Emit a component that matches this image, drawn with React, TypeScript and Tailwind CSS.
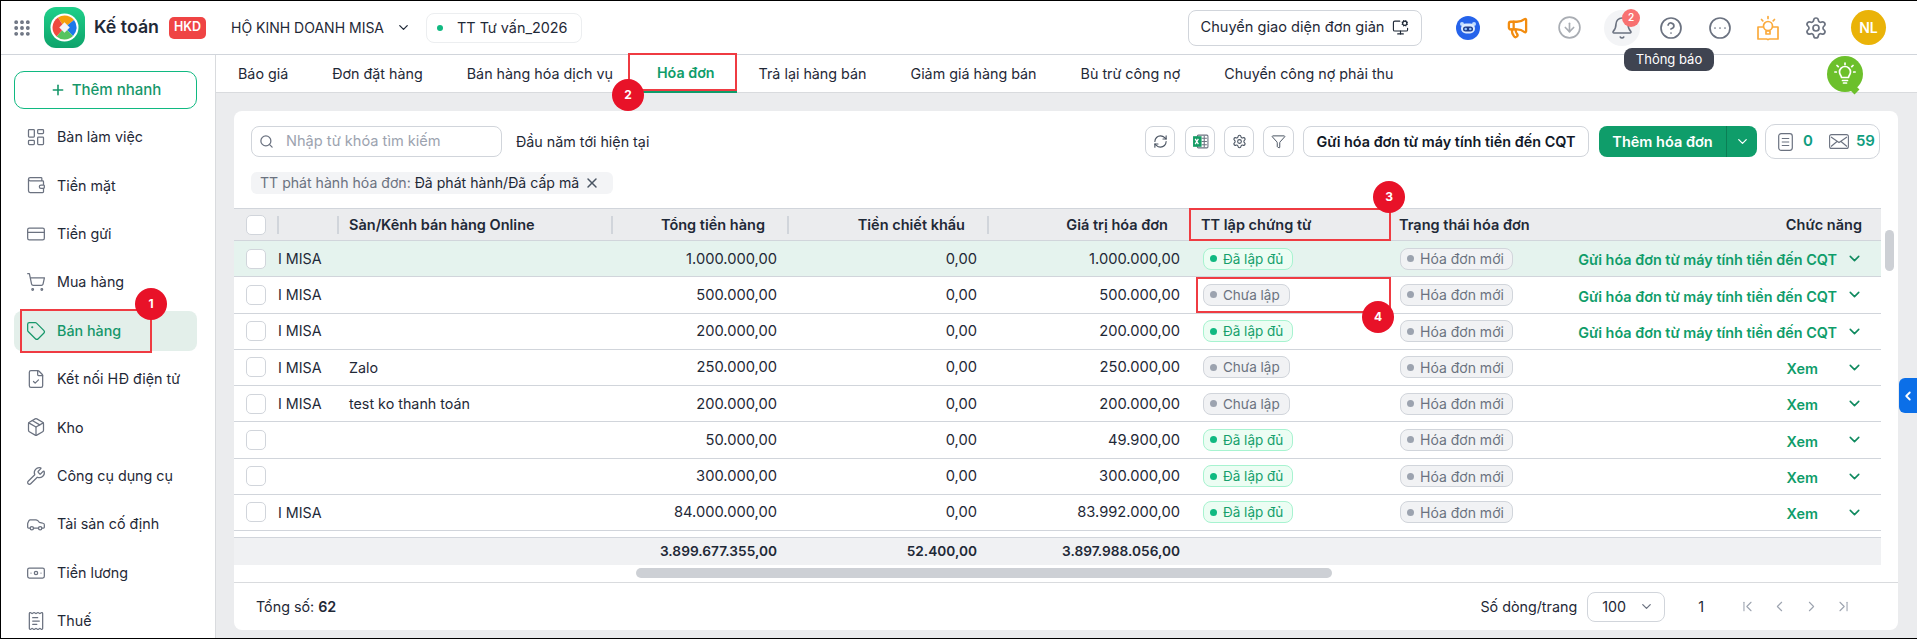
import React from 'react';
import { Grip, ChevronDown, MonitorCog, Megaphone, CircleArrowDown, Bell, CircleHelp, CircleEllipsis, Settings, Plus, LayoutDashboard, Wallet, CreditCard, ShoppingCart, Tag, FileCheck, Package, Wrench, Car, Banknote, ReceiptText, Search, X, RefreshCw, Funnel, ChevronFirst, ChevronLast, ChevronLeft, ChevronRight } from 'lucide-react';

const gridCols = 'grid grid-cols-[43px_60px_274px_176px_200px_203px_198px_493px]';

const navItems = [
  { label: 'Bàn làm việc', Icon: LayoutDashboard },
  { label: 'Tiền mặt', Icon: Wallet },
  { label: 'Tiền gửi', Icon: CreditCard },
  { label: 'Mua hàng', Icon: ShoppingCart },
  { label: 'Bán hàng', Icon: Tag, active: true },
  { label: 'Kết nối HĐ điện tử', Icon: FileCheck },
  { label: 'Kho', Icon: Package },
  { label: 'Công cụ dụng cụ', Icon: Wrench },
  { label: 'Tài sản cố định', Icon: Car },
  { label: 'Tiền lương', Icon: Banknote },
  { label: 'Thuế', Icon: ReceiptText },
];

const tabs = ['Báo giá', 'Đơn đặt hàng', 'Bán hàng hóa dịch vụ', 'Hóa đơn', 'Trả lại hàng bán', 'Giảm giá hàng bán', 'Bù trừ công nợ', 'Chuyển công nợ phải thu'];

const SEND = 'Gửi hóa đơn từ máy tính tiền đến CQT';
const rows = [
  { org: 'I MISA', ch: '', a: '1.000.000,00', b: '0,00', c: '1.000.000,00', ok: true, act: SEND, sel: true },
  { org: 'I MISA', ch: '', a: '500.000,00', b: '0,00', c: '500.000,00', ok: false, act: SEND },
  { org: 'I MISA', ch: '', a: '200.000,00', b: '0,00', c: '200.000,00', ok: true, act: SEND },
  { org: 'I MISA', ch: 'Zalo', a: '250.000,00', b: '0,00', c: '250.000,00', ok: false, act: 'Xem' },
  { org: 'I MISA', ch: 'test ko thanh toán', a: '200.000,00', b: '0,00', c: '200.000,00', ok: false, act: 'Xem' },
  { org: '', ch: '', a: '50.000,00', b: '0,00', c: '49.900,00', ok: true, act: 'Xem' },
  { org: '', ch: '', a: '300.000,00', b: '0,00', c: '300.000,00', ok: true, act: 'Xem' },
  { org: 'I MISA', ch: '', a: '84.000.000,00', b: '0,00', c: '83.992.000,00', ok: true, act: 'Xem' },
];

function Logo() {
  return (
    <div className="w-[41px] h-[41px] rounded-[12px] bg-gradient-to-b from-[#1fd08a] to-[#0ea36b] flex items-center justify-center">
      <svg width="29" height="29" viewBox="0 0 29 29">
        <circle cx="14.5" cy="14.5" r="14" fill="#fff" />
        <path d="M14.5 2.500A12 12 0 0 1 24 7L14.500 14.500L8 4.500A12 12 0 0 1 14.500 2.500Z" fill="#f59e0b" />
        <path d="M24 7A12 12 0 0 1 23 23L14.500 14.500Z" fill="#1d78e8" />
        <path d="M23 23A12 12 0 0 1 6.500 23.500L14.500 14.500Z" fill="#55c45f" />
        <path d="M6.500 23.500A12 12 0 0 1 8 4.500L14.500 14.500Z" fill="#ee4a3e" />
        <rect x="10.800" y="10.800" width="7.400" height="7.400" transform="rotate(45 14.500 14.500)" fill="#f3f4f6" />
      </svg>
    </div>
  );
}

function BotIcon() {
  return (
    <svg width="24" height="24" viewBox="0 0 24 24">
      <circle cx="12" cy="12" r="12" fill="#2563eb" />
      <circle cx="6" cy="8" r="2" fill="#bfdbfe" />
      <circle cx="18" cy="8" r="2" fill="#bfdbfe" />
      <rect x="5" y="7.500" width="14" height="10" rx="5" fill="#dbeafe" />
      <rect x="7" y="10.500" width="10" height="5" rx="2.500" fill="#1e3a8a" />
      <circle cx="9.700" cy="13" r="1.300" fill="#93c5fd" />
      <circle cx="14.300" cy="13" r="1.300" fill="#93c5fd" />
    </svg>
  );
}

function BookBulb() {
  return (
    <svg width="24" height="26" viewBox="0 0 24 26" fill="none" stroke="#fbab3d" strokeWidth="1.700" strokeLinecap="round" strokeLinejoin="round">
      <path d="M7 12H2v12h8.500c.6 0 1 .6 1.500.6s.9-.6 1.500-.6H22V12h-5" />
      <circle cx="12" cy="11" r="4.500" />
      <path d="M10 16h4v3h-4z" />
      <path d="M12 1.500v2M5.500 4.500l1.300 1.300M18.500 4.500l-1.300 1.300" />
    </svg>
  );
}

function ExcelIcon() {
  return (
    <svg width="17" height="17" viewBox="0 0 16 16">
      <rect x="5" y="2" width="10" height="12" rx="1" fill="#fff" stroke="#6b7280" />
      <path d="M9 5h5M9 8h5M9 11h5M11.500 2.500v11" stroke="#6b7280" />
      <rect x="1" y="3" width="8" height="10" fill="#149c64" />
      <path d="M3 5.500l3 5M6 5.500l-3 5" stroke="#fff" strokeWidth="1.200" />
    </svg>
  );
}

function DocIcon() {
  return (
    <svg width="15" height="18" viewBox="0 0 15 18" fill="none" stroke="#6b7280" strokeWidth="1.200">
      <rect x="0.700" y="0.700" width="13.600" height="16.600" rx="2.500" />
      <path d="M3.800 5.500h7.400M3.800 9h7.400M3.800 12.500h7.400" />
    </svg>
  );
}

function EnvIcon() {
  return (
    <svg width="20" height="15" viewBox="0 0 20 15" fill="none" stroke="#6b7280" strokeWidth="1.100">
      <rect x="0.600" y="0.600" width="18.800" height="13.800" rx="2" />
      <path d="M2 3l8 5.500L18 3M2 12.500l6-5M18 12.500l-6-5" />
    </svg>
  );
}

function BulbBadge() {
  return (
    <svg width="22" height="24" viewBox="0 0 22 24" fill="none" stroke="#fff" strokeWidth="1.700" strokeLinecap="round" strokeLinejoin="round">
      <path d="M7.500 15.500c0-2-2-2.800-2-5.500a5.500 5.500 0 0 1 11 0c0 2.700-2 3.500-2 5.500z" />
      <path d="M8.500 18.500h5M9.500 21h3" />
      <path d="M11 1v1.500M3 3.500l1.200 1.200M19 3.500l-1.200 1.200M.800 10h1.500M19.700 10h1.500" />
    </svg>
  );
}

function Badge({ n, className }: { n: number; className: string }) {
  return (
    <div className={`absolute w-8 h-8 rounded-full bg-[#e81228] text-white text-[12px] font-bold flex items-center justify-center ${className}`}>{n}</div>
  );
}

function Status({ ok }: { ok: boolean }) {
  return ok ? (
    <span className="inline-flex items-center h-[22px] w-[90px] pl-[6px] gap-[6px] rounded-lg border border-[#a7f3d0] bg-[#ecfdf3] text-[13.5px] text-[#16a06c] whitespace-nowrap">
      <span className="w-[7px] h-[7px] rounded-full bg-[#10b981]" />Đã lập đủ
    </span>
  ) : (
    <span className="inline-flex items-center h-[22px] w-[87px] pl-[6px] gap-[6px] rounded-lg border border-[#d1d5db] bg-[#f1f2f4] text-[13.5px] text-[#6b7280] whitespace-nowrap">
      <span className="w-[7px] h-[7px] rounded-full bg-[#9ca3af]" />Chưa lập
    </span>
  );
}

function IconBtn({ children, w = 'w-[30px]' }: { children: React.ReactNode; w?: string }) {
  return <button className={`${w} h-[31px] rounded-lg border border-[#d1d5db] bg-white flex items-center justify-center text-[#4b5563]`}>{children}</button>;
}

export default function App() {
  return (
    <div className="relative w-[1917px] h-[639px] overflow-hidden border-y border-l border-black bg-white flex flex-col text-[14.3px] text-[#1f2937] font-['Inter','Noto_Sans',sans-serif]">
      {/* Header */}
      <header className="h-[53px] shrink-0 flex items-center pl-[11px] bg-white">
        <Grip size={20} className="text-[#6b7280]" strokeWidth={2.6} />
        <div className="ml-[12px]"><Logo /></div>
        <span className="ml-[9px] text-[17.8px] font-semibold text-[#1f2937] w-[66px] whitespace-nowrap">Kế toán</span>
        <span className="ml-[9px] w-[37px] h-[22px] rounded-[5px] bg-[#ef4444] text-white text-[12.5px] font-semibold flex items-center justify-center">HKD</span>
        <span className="ml-[25px] whitespace-nowrap w-[156px] text-[14px]">HỘ KINH DOANH MISA</span>
        <ChevronDown size={15} className="ml-[9px]" />
        <div className="ml-[15px] w-[156px] h-[30px] rounded-lg border border-[#eceef0] flex items-center pl-[10px] gap-[14px]">
          <span className="w-[6px] h-[6px] rounded-full bg-[#10b981]" />
          <span className="text-[14.4px] whitespace-nowrap">TT Tư vấn_2026</span>
        </div>
        <button className="ml-[606px] w-[234px] h-[36px] rounded-lg border border-[#d1d5db] flex items-center justify-center gap-[8px] text-[14.6px] whitespace-nowrap">
          Chuyển giao diện đơn giản
          <MonitorCog size={17} strokeWidth={1.6} />
        </button>
        <div className="ml-[28px] flex items-center">
          <div className="w-[36px] flex justify-center"><BotIcon /></div>
          <div className="ml-[13px] w-[36px] flex justify-center"><Megaphone size={23} className="text-[#f28c0f]" strokeWidth={2.4} /></div>
          <div className="ml-[16px] w-[36px] flex justify-center"><CircleArrowDown size={25} className="text-[#a9adb3]" strokeWidth={1.6} /></div>
          <div className="relative ml-[17px] w-[36px] h-[36px] rounded-full bg-[#f3f4f6] flex items-center justify-center">
            <Bell size={24} className="text-[#6b7280]" strokeWidth={1.6} />
            <span className="absolute -top-[1px] right-0 w-[18px] h-[18px] rounded-full bg-[#f87171] text-white text-[10px] font-semibold flex items-center justify-center">2</span>
          </div>
          <div className="ml-[13px] w-[36px] flex justify-center"><CircleHelp size={24} className="text-[#6b7280]" strokeWidth={1.7} /></div>
          <div className="ml-[13px] w-[36px] flex justify-center"><CircleEllipsis size={24} className="text-[#6b7280]" strokeWidth={1.7} /></div>
          <div className="ml-[12px] w-[36px] flex justify-center"><BookBulb /></div>
          <div className="ml-[12px] w-[36px] flex justify-center"><Settings size={24} className="text-[#6b7280]" strokeWidth={1.7} /></div>
          <div className="ml-[17px] w-[35px] h-[35px] rounded-full bg-[#eab308] text-white text-[14px] font-semibold flex items-center justify-center">NL</div>
        </div>
      </header>

      <div className="flex flex-1 min-h-0 border-t border-[#d1d5db]">
        {/* Sidebar */}
        <aside className="w-[215px] shrink-0 border-r border-[#d9dbde] bg-white pt-[16px] px-[13px] overflow-hidden">
          <button className="w-[183px] h-[38px] rounded-[10px] border border-[#10b981] text-[#16976a] font-medium text-[15px] flex items-center justify-center gap-[6px]">
            <Plus size={16} strokeWidth={2.4} />Thêm nhanh
          </button>
          <nav className="mt-[8px] flex flex-col gap-[8.4px]">
            {navItems.map(({ label, Icon, active }) => (
              <div key={label} className={`h-[40px] shrink-0 w-[183px] rounded-lg flex items-center pl-[12px] gap-[11px] ${active ? 'bg-[#e3efea] text-[#16976a] font-medium' : ''}`}>
                <Icon size={20} strokeWidth={1.5} className={active ? 'text-[#16976a]' : 'text-[#6b7280]'} />
                <span className="whitespace-nowrap">{label}</span>
              </div>
            ))}
          </nav>
        </aside>

        {/* Main */}
        <main className="flex-1 min-w-0 bg-[#ebecee] flex flex-col">
          <div className="h-[38px] shrink-0 bg-white border-b border-[#d9dbde] flex items-stretch">
            {tabs.map((t) => (
              <div key={t} className={`px-[22px] flex items-center whitespace-nowrap ${t === 'Hóa đơn' ? 'font-semibold text-[#0f9d6a] border-b-[3px] border-[#0f9d6a] mb-[-1px]' : ''}`}>{t}</div>
            ))}
          </div>

          <section className="mt-[18px] ml-[18px] w-[1664px] h-[519px] bg-white rounded-lg flex flex-col">
            <div className="pt-[15px] pl-[17px] pr-[18px] flex items-center h-[46px] shrink-0">
              <div className="w-[251px] h-[31px] rounded-lg border border-[#d1d5db] flex items-center pl-[7px] gap-[12px]">
                <Search size={15} className="text-[#6b7280]" />
                <span className="text-[14.6px] text-[#9ca3af] whitespace-nowrap">Nhập từ khóa tìm kiếm</span>
              </div>
              <span className="ml-[14px] whitespace-nowrap">Đầu năm tới hiện tại</span>
              <div className="ml-auto flex items-center">
                <IconBtn><RefreshCw size={15} strokeWidth={1.8} /></IconBtn>
                <div className="ml-[10px]"><IconBtn><ExcelIcon /></IconBtn></div>
                <div className="ml-[9px]"><IconBtn><Settings size={15} strokeWidth={1.7} /></IconBtn></div>
                <div className="ml-[9px]"><IconBtn w="w-[31px]"><Funnel size={15} strokeWidth={1.6} /></IconBtn></div>
                <button className="ml-[9px] w-[286px] h-[31px] rounded-lg border border-[#d1d5db] font-semibold text-[14.4px] text-[#111827] whitespace-nowrap">{SEND}</button>
                <div className="ml-[10px] w-[158px] h-[31px] rounded-lg bg-[#0f9d6a] text-white font-semibold text-[14.5px] flex items-center">
                  <span className="w-[127px] text-center">Thêm hóa đơn</span>
                  <span className="flex-1 h-full border-l border-[#0b7f55] flex items-center justify-center"><ChevronDown size={15} /></span>
                </div>
                <div className="ml-[8px] w-[115px] h-[35px] rounded-[10px] border border-[#d1d5db] flex items-center pl-[12px]">
                  <DocIcon />
                  <span className="ml-[10px] text-[#0f9d80] font-semibold text-[15px]">0</span>
                  <span className="ml-[16px]"><EnvIcon /></span>
                  <span className="ml-[7px] text-[#0f9d80] font-semibold text-[15px]">59</span>
                </div>
              </div>
            </div>

            <div className="mt-[15px] ml-[17px] w-[362px] h-[22px] rounded-md bg-[#f3f4f6] flex items-center pl-[9px] text-[14.1px] whitespace-nowrap">
              <span className="text-[#6b7280]">TT phát hành hóa đơn:&nbsp;</span>
              <span>Đã phát hành/Đã cấp mã</span>
              <X size={16} className="ml-[5px] text-[#4b5563]" strokeWidth={2.2} />
            </div>

            {/* Table */}
            <div className="mt-[14px] w-[1647px]">
              <div className={`${gridCols} h-[33px] bg-[#ebecee] border-y border-[#d1d5db] font-semibold text-[14.5px] text-[#1f2937] items-center whitespace-nowrap`}>
                <div className="pl-[12px] flex items-center"><span className="w-5 h-5 rounded-[5px] border border-[#d1d5db] bg-white" /></div>
                <div className="flex items-center"><span className="w-[2px] h-[18px] bg-[#d1d5db]" /></div>
                <div className="flex items-center"><span className="w-[2px] h-[18px] bg-[#d1d5db]" /><span className="ml-[10px]">Sàn/Kênh bán hàng Online</span></div>
                <div className="flex items-center justify-between pr-[22px]"><span className="w-[2px] h-[18px] bg-[#d1d5db]" />Tổng tiền hàng</div>
                <div className="flex items-center justify-between pr-[22px]"><span className="w-[2px] h-[18px] bg-[#d1d5db]" />Tiền chiết khấu</div>
                <div className="flex items-center justify-between pr-[22px]"><span className="w-[2px] h-[18px] bg-[#d1d5db]" />Giá trị hóa đơn</div>
                <div className="pl-[11px]">TT lập chứng từ</div>
                <div className="pl-[11px] flex justify-between pr-[19px]"><span>Trạng thái hóa đơn</span><span>Chức năng</span></div>
              </div>
              {rows.map((r, i) => (
                <div key={i} className={`${gridCols} h-[36.25px] border-b border-[#d1d5db] items-center ${r.sel ? 'bg-[#e5f3ee]' : ''}`}>
                  <div className="pl-[12px] flex items-center"><span className="w-5 h-5 rounded-[5px] border border-[#d1d5db] bg-white" /></div>
                  <div className="pl-[1px] whitespace-nowrap">{r.org}</div>
                  <div className="pl-[12px]">{r.ch}</div>
                  <div className="text-right pr-[10px] text-[14.7px]">{r.a}</div>
                  <div className="text-right pr-[10px] text-[14.7px]">{r.b}</div>
                  <div className="text-right pr-[10px] text-[14.7px]">{r.c}</div>
                  <div className="pl-[13px] flex items-center"><Status ok={r.ok} /></div>
                  <div className="pl-[12px] flex items-center">
                    <span className="inline-flex items-center h-[22px] w-[113px] pl-[6px] gap-[6px] rounded-lg border border-[#d1d5db] bg-[#f1f2f4] text-[14px] text-[#6b7280] whitespace-nowrap">
                      <span className="w-[7px] h-[7px] rounded-full bg-[#9ca3af]" />Hóa đơn mới
                    </span>
                    <span className={`ml-auto pt-[3px] font-semibold text-[14.4px] text-[#0f9d6a] whitespace-nowrap ${r.act === 'Xem' ? 'mr-[19px]' : ''}`}>{r.act}</span>
                    <ChevronDown size={17} strokeWidth={2.2} className="ml-[9px] mr-[18px] text-[#0f8a5f]" />
                  </div>
                </div>
              ))}
              <div className={`${gridCols} mt-[6px] h-[28px] bg-[#f0f1f3] border-t border-[#d1d5db] items-center font-semibold text-[13.7px]`}>
                <div /><div /><div />
                <div className="text-right pr-[10px]">3.899.677.355,00</div>
                <div className="text-right pr-[10px]">52.400,00</div>
                <div className="text-right pr-[10px]">3.897.988.056,00</div>
                <div /><div />
              </div>
            </div>
            <div className="mt-[3px] ml-[402px] w-[696px] h-[10px] rounded-full bg-[#cdd0d5]" />
            <div className="mt-[4px] flex-1 border-t border-[#d9dbde] flex items-center pl-[22px] pr-[46px]">
              <span className="pt-[1px]">Tổng số: <b className="font-semibold">62</b></span>
              <div className="ml-auto flex items-center">
                <span>Số dòng/trang</span>
                <div className="ml-[10px] w-[78px] h-[30px] rounded-lg border border-[#d1d5db] flex items-center justify-between pl-[14px] pr-[10px]">
                  <span>100</span>
                  <ChevronDown size={15} className="text-[#6b7280]" />
                </div>
                <span className="ml-[33px]">1</span>
                <ChevronFirst size={17} strokeWidth={1.5} className="ml-[35px] text-[#9ca3af]" />
                <ChevronLeft size={17} strokeWidth={1.5} className="ml-[15px] text-[#9ca3af]" />
                <ChevronRight size={17} strokeWidth={1.5} className="ml-[15px] text-[#9ca3af]" />
                <ChevronLast size={17} strokeWidth={1.5} className="ml-[15px] text-[#9ca3af]" />
              </div>
            </div>
          </section>
        </main>
      </div>

      {/* Overlays */}
      <div className="absolute left-[1623px] top-[47px] w-[90px] h-[23px] rounded-lg bg-[#3f4451] text-white text-[13px] flex items-center justify-center">Thông báo</div>
      <div className="absolute left-[1826px] top-[55px] w-[36px] h-[36px] rounded-full bg-[#6cc02b] flex items-center justify-center">
        <BulbBadge />
        <span className="absolute -bottom-[1px] right-[5px] w-[7px] h-[7px] bg-[#6cc02b] rotate-45" />
      </div>
      <div className="absolute left-[1884px] top-[229px] w-[9px] h-[41px] rounded-full bg-[#cdd0d5]" />
      <div className="absolute left-[1898px] top-[377px] w-[18px] h-[35px] rounded-l-md bg-[#0b6fe8] flex items-center justify-center text-white">
        <ChevronLeft size={14} strokeWidth={3.2} />
      </div>

      <div className="absolute left-[19px] top-[308px] w-[132px] h-[44px] border-[2px] border-[#ef3b42]" />
      <div className="absolute left-[627px] top-[52px] w-[109px] h-[38px] border-[2px] border-[#ef3b42]" />
      <div className="absolute left-[1188px] top-[207px] w-[202px] h-[33px] border-[2px] border-[#ef3b42]" />
      <div className="absolute left-[1195px] top-[276px] w-[195px] h-[36px] border-[2px] border-[#ef3b42]" />
      <Badge n={1} className="left-[134px] top-[287px]" />
      <Badge n={2} className="left-[611px] top-[78px]" />
      <Badge n={3} className="left-[1372px] top-[180px]" />
      <Badge n={4} className="left-[1361px] top-[300px]" />
    </div>
  );
}
